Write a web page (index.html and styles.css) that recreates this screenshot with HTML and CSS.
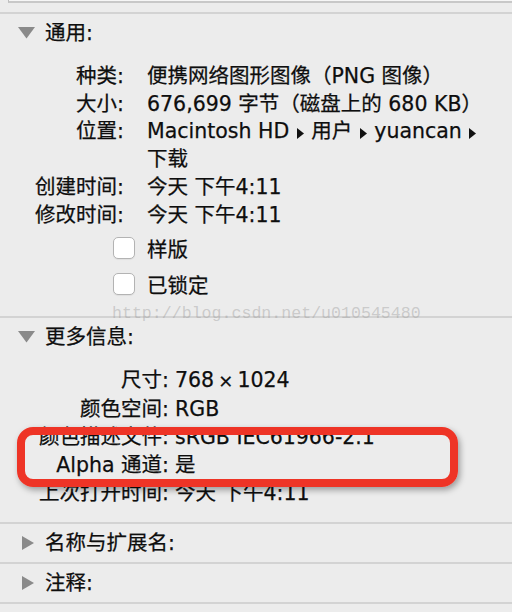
FILE: index.html
```html
<!DOCTYPE html>
<html lang="zh-CN">
<head>
<meta charset="utf-8">
<title>简介</title>
<link rel="stylesheet" href="styles.css">
</head>
<body>
<div class="topbox"></div>

<section class="sec">
  <div class="hdr">
    <svg class="tri" width="17" height="14" viewBox="0 0 17 14"><polygon points="0,1 17,1 8.5,12.5"/></svg>
    <span>通用:</span>
  </div>
  <div class="grid g1">
    <div class="lbl">种类:</div><div class="val">便携网络图形图像（PNG 图像）</div>
    <div class="lbl">大小:</div><div class="val">676,699 字节（磁盘上的 680 KB）</div>
    <div class="lbl">位置:</div><div class="val">Macintosh HD <svg class="arr" width="7" height="11" viewBox="0 0 7 11"><polygon points="0,0 7,5.5 0,11"/></svg> 用户 <svg class="arr" width="7" height="11" viewBox="0 0 7 11"><polygon points="0,0 7,5.5 0,11"/></svg> yuancan <svg class="arr" width="7" height="11" viewBox="0 0 7 11"><polygon points="0,0 7,5.5 0,11"/></svg><br>下载</div>
    <div class="lbl">创建时间:</div><div class="val">今天 下午4:11</div>
    <div class="lbl">修改时间:</div><div class="val">今天 下午4:11</div>
  </div>
  <div class="checks">
    <label class="chk"><span class="box"></span><span>样版</span></label>
    <label class="chk"><span class="box"></span><span>已锁定</span></label>
  </div>
</section>

<section class="sec">
  <div class="hdr">
    <svg class="tri" width="17" height="14" viewBox="0 0 17 14"><polygon points="0,1 17,1 8.5,12.5"/></svg>
    <span>更多信息:</span>
  </div>
  <div class="grid g2">
    <div class="lbl">尺寸:</div><div class="val">768&thinsp;<span class="times">×</span>&thinsp;1024</div>
    <div class="lbl">颜色空间:</div><div class="val">RGB</div>
    <div class="lbl">颜色描述文件:</div><div class="val">sRGB IEC61966-2.1</div>
    <div class="lbl">Alpha 通道:</div><div class="val">是</div>
    <div class="lbl">上次打开时间:</div><div class="val">今天 下午4:11</div>
  </div>
</section>

<section class="sec closed">
  <div class="hdr">
    <svg class="tri" width="17" height="14" viewBox="0 0 17 14"><polygon points="4,0 16,7 4,14"/></svg>
    <span>名称与扩展名:</span>
  </div>
</section>

<section class="sec closed">
  <div class="hdr">
    <svg class="tri" width="17" height="14" viewBox="0 0 17 14"><polygon points="4,0 16,7 4,14"/></svg>
    <span>注释:</span>
  </div>
</section>

<section class="sec closed last">
  <div class="hdr">
    <svg class="tri" width="17" height="14" viewBox="0 0 17 14"><polygon points="4,0 16,7 4,14"/></svg>
    <span>打开方式:</span>
  </div>
</section>

<div class="watermark">http://blog.csdn.net/u010545480</div>
<div class="mark"></div>
</body>
</html>
```

FILE: styles.css
```css
html, body {
  margin: 0;
  padding: 0;
}
body {
  width: 512px;
  height: 612px;
  overflow: hidden;
  position: relative;
  background: #ececec;
  color: #0e0e0e;
  font-family: "DejaVu Sans", "Noto Sans CJK SC", sans-serif;
  font-size: 20.5px;
  -webkit-text-stroke: 0.25px #0e0e0e;
}

.topbox {
  margin-left: 8px;
  height: 1px;
  background: #f6f6f6;
  border-left: 1px solid #bdbdbd;
  border-bottom: 2px solid #c8c8c8;
  margin-bottom: 9px;
}

.sec {
  border-top: 2px solid #d3d3d3;
  padding-bottom: 14px;
}
.sec.closed {
  padding-bottom: 0;
}
.sec:nth-of-type(2) {
  padding-bottom: 15px;
}

.hdr {
  height: 38px;
  display: flex;
  align-items: center;
  padding-left: 18px;
  gap: 10px;
  line-height: 1;
}
.tri {
  fill: #8a8a8a;
  flex: none;
}

.grid {
  display: grid;
}
.g1 {
  grid-template-columns: 124px 1fr;
  column-gap: 23px;
  line-height: 27.7px;
  margin-top: 11px;
}
.g2 {
  grid-template-columns: 169px 1fr;
  column-gap: 6px;
  line-height: 28px;
  margin-top: 10px;
}
.lbl {
  text-align: right;
  white-space: nowrap;
}
.val {
  white-space: nowrap;
}
.times {
  font-size: 18px;
}
.arr {
  fill: #111;
  vertical-align: -1px;
  margin: 0 1px;
}

.checks {
  display: flex;
  flex-direction: column;
  margin-top: 1px;
  padding-left: 113px;
}
.chk {
  height: 36px;
  display: flex;
  align-items: center;
  gap: 12px;
}
.box {
  width: 20px;
  height: 20px;
  border: 1px solid #b3b3b3;
  border-radius: 5px;
  background: #fff;
  box-shadow: 0 1px 1px rgba(0, 0, 0, 0.06);
}

.watermark {
  position: absolute;
  left: 112px;
  top: 306px;
  font-family: "Liberation Mono", monospace;
  font-size: 16.6px;
  line-height: 16.6px;
  color: rgba(150, 150, 150, 0.4);
  -webkit-text-stroke: 0;
  white-space: nowrap;
}

.mark {
  position: absolute;
  left: 17px;
  top: 427px;
  width: 441px;
  height: 60px;
  box-sizing: border-box;
  border: 8px solid #ee3426;
  border-radius: 16px;
  box-shadow: 2px 3px 6px rgba(0, 0, 0, 0.35);
}
```
